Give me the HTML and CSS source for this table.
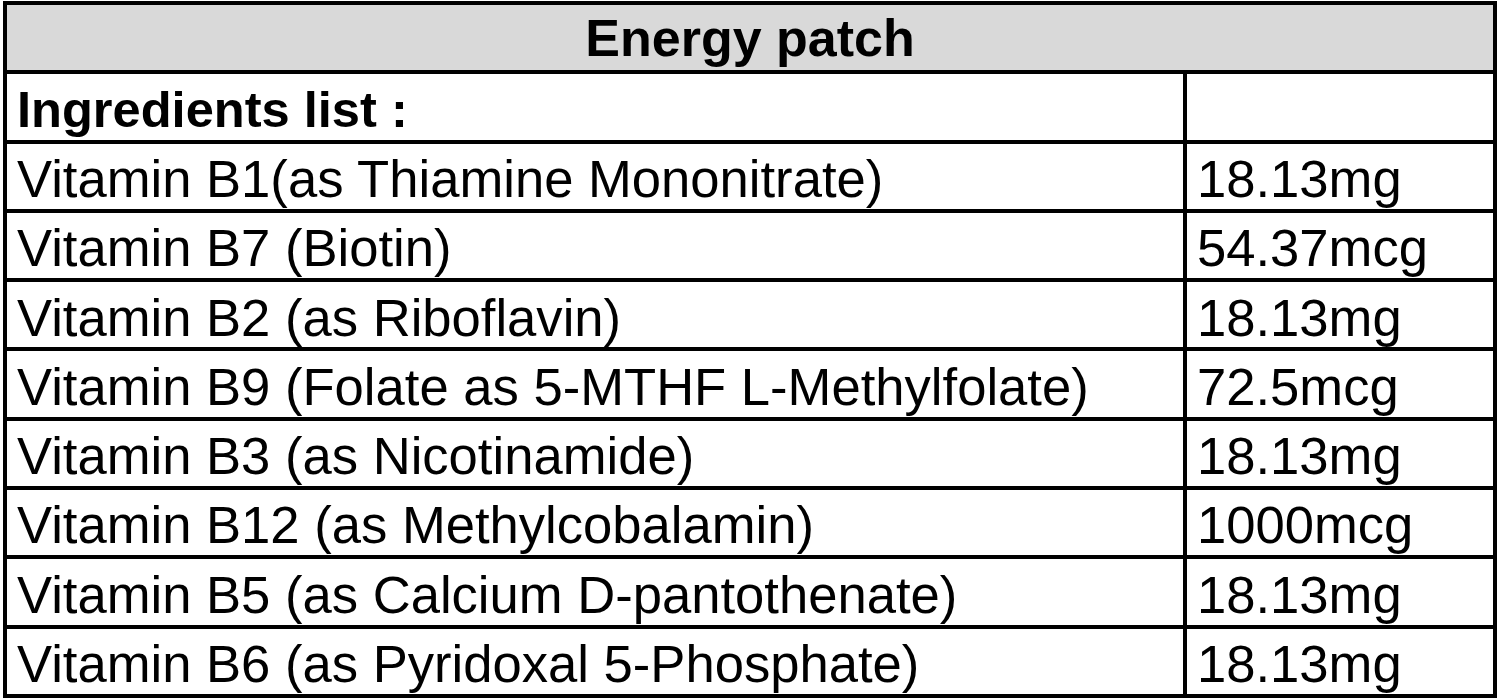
FILE: index.html
```html
<!DOCTYPE html>
<html lang="en">
<head>
<meta charset="utf-8">
<title>Energy patch</title>
<link rel="stylesheet" href="styles.css">
</head>
<body>
<table class="facts">
  <colgroup><col class="col-name"><col class="col-amount"></colgroup>
  <thead>
    <tr><th colspan="2" class="title">Energy patch</th></tr>
  </thead>
  <tbody>
    <tr><td class="label">Ingredients list :</td><td></td></tr>
    <tr><td>Vitamin B1(as Thiamine Mononitrate)</td><td>18.13mg</td></tr>
    <tr><td>Vitamin B7 (Biotin)</td><td>54.37mcg</td></tr>
    <tr><td>Vitamin B2 (as Riboflavin)</td><td>18.13mg</td></tr>
    <tr><td>Vitamin B9 (Folate as 5-MTHF L-Methylfolate)</td><td>72.5mcg</td></tr>
    <tr><td>Vitamin B3 (as Nicotinamide)</td><td>18.13mg</td></tr>
    <tr><td>Vitamin B12 (as Methylcobalamin)</td><td>1000mcg</td></tr>
    <tr><td>Vitamin B5 (as Calcium D-pantothenate)</td><td>18.13mg</td></tr>
    <tr><td>Vitamin B6 (as Pyridoxal 5-Phosphate)</td><td>18.13mg</td></tr>
  </tbody>
</table>
</body>
</html>
```
FILE: styles.css
```css
html, body {
  margin: 0;
  padding: 0;
  background: #ffffff;
}
body {
  font-family: "Liberation Sans", Arial, sans-serif;
  color: #000000;
}
.facts {
  border-collapse: collapse;
  table-layout: fixed;
  width: 1494px;
  margin: 1px 0 0 3px;
  border: 4px solid #000;
}
.col-name { width: 1180px; }
.col-amount { width: 310px; }
.facts th,
.facts td {
  border: 4px solid #000;
  height: 69.3px;
  box-sizing: border-box;
  padding: 6px 0 0 10px;
  font-size: 52.6px;
  line-height: 1;
  white-space: nowrap;
  text-align: left;
  vertical-align: middle;
}
.facts th.title {
  background: #d9d9d9;
  font-weight: bold;
  font-size: 52px;
  text-align: center;
  padding: 0;
}
.facts td.label {
  font-weight: bold;
  font-size: 50.6px;
}
```
